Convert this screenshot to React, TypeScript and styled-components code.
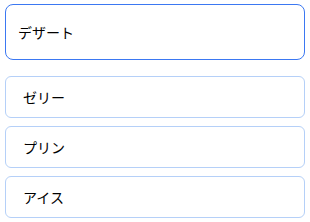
import React from 'react';
import styled, { createGlobalStyle } from 'styled-components';

const GlobalStyle = createGlobalStyle`
  html, body {
    margin: 0;
    padding: 0;
    background: #fff;
  }
  body {
    font-family: "Noto Sans CJK JP", "Noto Sans", sans-serif;
  }
`;

const Page = styled.div`
  display: flex;
  flex-direction: column;
  padding: 4px 5px;
  width: 300px;
`;

const Selected = styled.div`
  box-sizing: border-box;
  height: 56px;
  display: flex;
  align-items: center;
  padding: 0 12px;
  border: 1px solid #3b78f2;
  border-radius: 8px;
  font-size: 14px;
  color: #000;
  margin-bottom: 16px;
`;

const List = styled.div`
  display: flex;
  flex-direction: column;
  gap: 8px;
`;

const Option = styled.div`
  box-sizing: border-box;
  height: 42px;
  display: flex;
  align-items: center;
  padding: 0 17px;
  border: 1px solid #b5d0f8;
  border-radius: 6px;
  font-size: 14px;
  color: #000;
`;

const options = ['ゼリー', 'プリン', 'アイス'];

export default function App() {
  return (
    <>
      <GlobalStyle />
      <Page>
        <Selected>デザート</Selected>
        <List>
          {options.map(o => (
            <Option key={o}>{o}</Option>
          ))}
        </List>
      </Page>
    </>
  );
}
